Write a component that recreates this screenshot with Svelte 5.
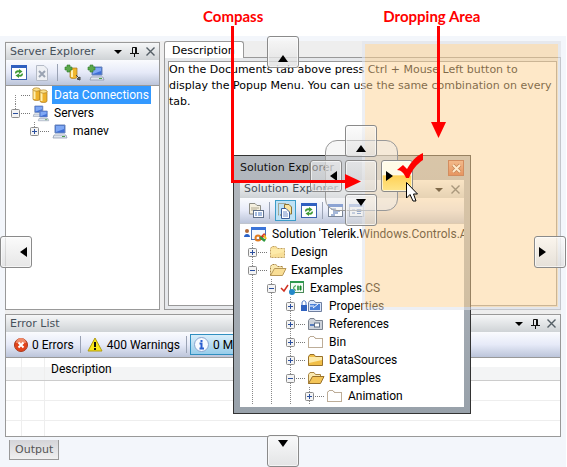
<script>
  const servers = [
    { label: 'Data Connections', icon: 'db', cells: ['down'], stub: true, selected: true },
    { label: 'Servers', icon: 'servers', cells: ['up minus'] },
    { label: 'manev', icon: 'pc', cells: ['', 'up plus'] }
  ];
  const solution = [
    { label: "Solution 'Telerik.Windows.Controls.A", icon: 'solution', cells: [] },
    { label: 'Design', icon: 'folderdots', cells: ['line plus'] },
    { label: 'Examples', icon: 'opendots', cells: ['line minus'] },
    { label: 'Examples.CS', icon: 'csharp', cells: ['line', 'line minus'] },
    { label: 'Properties', icon: 'properties', cells: ['line', 'line', 'line plus'] },
    { label: 'References', icon: 'references', cells: ['line', 'line', 'line plus'] },
    { label: 'Bin', icon: 'ghost', cells: ['line', 'line', 'line plus'] },
    { label: 'DataSources', icon: 'folder', cells: ['line', 'line', 'line plus'] },
    { label: 'Examples', icon: 'open', cells: ['line', 'line', 'line minus'] },
    { label: 'Animation', icon: 'ghost', cells: ['line', 'line', 'line', 'line plus'] }
  ];
  const arrows = {
    up: 'M5 0L10 7H0Z',
    down: 'M0 0H10L5 7Z',
    left: 'M7 0V10L0 5Z',
    right: 'M0 0V10L7 5Z'
  };
</script>

{#snippet arrow(dir)}
  <svg class="arrow" width={dir === 'up' || dir === 'down' ? 10 : 7} height={dir === 'up' || dir === 'down' ? 7 : 10}><path d={arrows[dir]} /></svg>
{/snippet}

{#snippet monitor(x, y)}
  <g transform="translate({x} {y})">
    <path d="M1 0H11V8H1Z" fill="#3f6fd6" stroke="#6d87b8" />
    <path d="M2 1H10V4L2 7Z" fill="#7fa8f4" />
    <path d="M0 10H12L13 13H-1Z" fill="#dfe5ee" stroke="#8794a8" stroke-width=".7" />
    <path d="M8 11.500H11" stroke="#4a9e4a" />
  </g>
{/snippet}

{#snippet plusMark(x, y)}
  <path transform="translate({x} {y})" d="M2 0H5V2H7V5H5V7H2V5H0V2H2Z" fill="#5aa84a" stroke="#2f7a2a" stroke-width=".6" />
{/snippet}

{#snippet refresh(x, y)}
  <g transform="translate({x} {y})">
    <rect x=".5" y=".5" width="15" height="14" fill="#fff" stroke="#3a62b0" />
    <path d="M0 0H16V3H0Z" fill="#2f5fc0" />
    <path d="M4 8C4 6 6 5 8 5.500V4L11.500 6.500L8 9V7.500C6 7 5.500 8 5 9Z" fill="#3f9a35" />
    <path d="M12 9C12 11 10 12 8 11.500V13L4.500 10.500L8 8.500V9.700C10 10 10.500 9.500 11 8Z" fill="#3f9a35" />
  </g>
{/snippet}

{#snippet treeIcon(kind)}
  <svg class="ticon" width="27" height="18">
    {#if kind !== 'solution' && kind !== 'csharp' && kind !== 'properties'}
      <path d="M-4 9.500H5" stroke="#777" stroke-dasharray="1 1" />
    {/if}
    {#if kind === 'db'}
      <path d="M8 3V13C8 15 15 15 15 13V3Z" fill="#eeb22d" stroke="#a8761a" stroke-width=".7" />
      <path d="M9.500 4V13" stroke="#fff0b0" stroke-width="2" />
      <ellipse cx="11.500" cy="3.500" rx="3.500" ry="1.700" fill="#fbe18a" stroke="#a8761a" stroke-width=".6" />
      <path d="M15 5V15C15 17 22 17 22 15V5Z" fill="#eeb22d" stroke="#a8761a" stroke-width=".7" />
      <path d="M16.500 6V15" stroke="#fff0b0" stroke-width="2" />
      <ellipse cx="18.500" cy="5.500" rx="3.500" ry="1.700" fill="#fbe18a" stroke="#a8761a" stroke-width=".6" />
    {:else if kind === 'servers'}
      <g transform="translate(9 2) scale(.8)">{@render monitor(0, 0)}</g>
      <g transform="translate(14 7) scale(.75)">{@render monitor(0, 0)}</g>
    {:else if kind === 'pc'}
      {@render monitor(10, 3)}
    {:else if kind === 'solution'}
      <circle cx="4" cy="6" r="2" fill="#b06a3a" />
      <path d="M1 12C1 8 7 8 7 12Z" fill="#2b62c8" />
      <rect x="8.500" y="2.500" width="14" height="12" fill="#f4f8ff" stroke="#4a72b8" />
      <path d="M8 2H23V5H8Z" fill="#3b74d8" />
      <circle cx="15" cy="13" r="2.500" fill="none" stroke="#e07a20" stroke-width="2" />
      <path d="M17 14L22 9" stroke="#d8302a" stroke-width="2.500" />
      <path d="M17 12L22 16" stroke="#2f9a3f" stroke-width="2.500" />
      <path d="M21 10L23 14" stroke="#f0c020" stroke-width="2" />
    {:else if kind === 'csharp'}
      <path d="M0 9L3 12L7 6" fill="none" stroke="#d03020" stroke-width="1.500" />
      <rect x="9.500" y="2.500" width="13" height="11" fill="#f4fbf4" stroke="#4a8a5a" />
      <path d="M9 2H23V4H9Z" fill="#2f9a4f" />
      <path d="M15 7C12 6 12 12 15 11M17 6.500V11.500M19.500 6.500V11.500M16 8H21M16 10H21" fill="none" stroke="#178a2a" />
      <circle cx="11" cy="13" r="3" fill="#2488c8" />
    {:else if kind === 'properties'}
      <rect x="1" y="8" width="6" height="6" fill="#2f62c0" />
      <path d="M2 8V6C2 3 6 3 6 6V8" fill="none" stroke="#4a78c8" />
      <path d="M8.500 14.500V5.500L10 3.500H14L15.500 5.500H21.500V14.500Z" fill="#dbe6fa" stroke="#6f7f9f" />
      <path d="M10 7H20V13H10Z" fill="#4a7fd8" />
      <path d="M10 9H14M13 11L18 7" stroke="#fff" />
    {:else if kind === 'references'}
      <path d="M8.500 14.500V5.500L10 3.500H14L15.500 5.500H22.500V14.500Z" fill="#cdd2da" stroke="#7c8490" />
      <path d="M10 10H14" stroke="#2f5fb0" stroke-width="1.500" />
      <rect x="14.500" y="8" width="5" height="4" fill="#fff" stroke="#5f6f88" />
    {:else if kind === 'ghost'}
      <path d="M8.500 14.500V5.500L10 3.500H14L15.500 5.500H22.500V14.500Z" fill="#fff" stroke="#7a5a30" stroke-dasharray="1 1" />
    {:else if kind === 'folder' || kind === 'folderdots'}
      <path d="M8.500 14.500V5.500L10 3.500H14L15.500 5.500H22.500V14.500Z" fill={kind === 'folder' ? '#f0be48' : '#f8df98'} stroke={kind === 'folder' ? '#98702a' : '#c0a060'} stroke-dasharray={kind === 'folder' ? 'none' : '2 1'} />
      <path d="M9 6H22V9L9 12Z" fill="#fdeaa8" />
    {:else}
      <path d="M8.500 14.500V5.500L10 3.500H14L15.500 5.500H20.500V8Z" fill="#fae9b0" stroke="#a88440" stroke-dasharray={kind === 'open' ? 'none' : '2 1'} />
      <path d="M8.500 14.500L12.500 7.500H24L20.500 14.500Z" fill={kind === 'open' ? '#f4c558' : '#f9de95'} stroke={kind === 'open' ? '#98702a' : '#b89858'} />
    {/if}
  </svg>
{/snippet}

{#snippet tree(rows)}
  <ul class="tree">
    {#each rows as row}
      <li>
        {#each row.cells as cell}
          <span class="cell {cell}">
            {#if cell.includes('plus') || cell.includes('minus')}
              <svg class="expander" width="9" height="9"><rect x=".5" y=".5" width="8" height="8" rx="1" fill="#f4f4f4" stroke="#8c8c8c" /><path d={cell.includes('plus') ? 'M2 4.500H7M4.500 2V7' : 'M2 4.500H7'} stroke="#2b4f9e" /></svg>
            {/if}
          </span>
        {/each}
        {@render treeIcon(row.icon)}
        <span class="label" class:selected={row.selected}>{row.label}</span>
      </li>
    {/each}
  </ul>
{/snippet}

{#snippet chrome(pin)}
  <span class="chrome">
    <button aria-label="Menu"><svg width="9" height="9"><path d="M0 3H8L4 7Z" fill="currentColor" /></svg></button>
    {#if pin}
      <button aria-label="Pin"><svg width="9" height="10"><path d="M2.500 6V.5H6.500V6M5.500 0V6M0 6.500H9M4.500 6V10" fill="none" stroke="#111" /></svg></button>
    {/if}
    <button aria-label="Close"><svg width="9" height="9"><path d="M.5 .5L8.500 8.500M8.500 .5L.5 8.500" stroke="#555f66" stroke-width="1.400" /></svg></button>
  </span>
{/snippet}

<div class="page">
  <header><span>Compass</span><span>Dropping Area</span></header>

  <div class="app">
    <div class="dock">
      <div class="upper">
        <section class="panel explorer">
          <div class="title"><h2>Server Explorer</h2>{@render chrome(true)}</div>
          <div class="toolbar">
            <button aria-label="Refresh"><svg width="16" height="16">{@render refresh(0, 0)}</svg></button>
            <button aria-label="Stop"><svg width="16" height="16"><path d="M2.500 .5H10L13.500 4V15.500H2.500Z" fill="#eef0f4" stroke="#b4bac6" /><path d="M5 6L11 12M11 6L5 12" stroke="#9aa3b2" stroke-width="2" /></svg></button>
            <i class="sep"></i>
            <button aria-label="Connect to database"><svg width="16" height="16"><path d="M5 3V12C5 14 12 14 12 12V3Z" fill="#f0b62e" stroke="#a8761a" stroke-width=".7" /><path d="M7 5V12" stroke="#fff0b0" stroke-width="2" /><path d="M11 10L14 13M12 14L15 12V15Z" stroke="#444" fill="#777" />{@render plusMark(0, 0)}</svg></button>
            <button aria-label="Connect to server"><svg width="16" height="16">{@render monitor(3, 2)}{@render plusMark(0, 0)}</svg></button>
          </div>
          {@render tree(servers)}
        </section>

        <section class="docs">
          <button class="tab">Description</button>
          <div class="frame"><div class="content">
            <p>On the Documents tab above press Ctrl + Mouse Left button to display the Popup Menu. You can use the same combination on every tab.</p>
          </div></div>
        </section>
      </div>

      <section class="panel errors">
        <div class="title"><h2>Error List</h2>{@render chrome(true)}</div>
        <div class="toolbar">
          <button class="filter"><svg width="14" height="14"><circle cx="7" cy="7" r="6.500" fill="#e2441c" stroke="#a83a20" /><path d="M2 5A5 5 0 0 1 12 5Z" fill="#f08a68" /><path d="M4.500 4.500L9.500 9.500M9.500 4.500L4.500 9.500" stroke="#fff" stroke-width="2" /></svg>0 Errors</button>
          <i class="sep"></i>
          <button class="filter"><svg width="16" height="15"><path d="M8 1L15 14H1Z" fill="#f8e51a" stroke="#b09a10" stroke-linejoin="round" /><path d="M8 5V10M8 11V13" stroke="#111" stroke-width="2" /></svg>400 Warnings</button>
          <i class="sep"></i>
          <button class="filter on"><svg width="15" height="15"><circle cx="7.500" cy="7.500" r="7" fill="#f6faff" stroke="#8aa6d0" /><path d="M7.500 3V5M5.500 6.500H7.500V11M5.500 11.500H10" fill="none" stroke="#2b5fd0" stroke-width="2" /></svg>0 Messages</button>
        </div>
        <table>
          <thead><tr><th class="a"></th><th class="b"></th><th>Description</th></tr></thead>
          <tbody>
            <tr><td></td><td></td><td></td></tr>
            <tr><td></td><td></td><td></td></tr>
            <tr class="last"><td></td><td></td><td></td></tr>
          </tbody>
        </table>
      </section>
    </div>
    <button class="output">Output</button>
  </div>

  <section class="window">
    <div class="caption"><h2>Solution Explorer</h2><button class="close" aria-label="Close window"><svg width="9" height="9"><path d="M1 1L8 8M8 1L1 8" stroke="#8b3a1c" stroke-width="3.500" /><path d="M1 1L8 8M8 1L1 8" stroke="#fff" stroke-width="2" /></svg></button></div>
    <div class="inner">
      <div class="title"><h2>Solution Explorer</h2>{@render chrome(false)}</div>
      <div class="toolbar">
        <button aria-label="Properties"><svg width="16" height="16"><path d="M1.500 .5H7L9 2.500H12.500V11H1.500Z" fill="#f4efdf" stroke="#8d8d85" /><path d="M3 5H11M3 7H9" stroke="#b0a890" /><rect x="5.500" y="7.500" width="10" height="7" fill="#fff" stroke="#5f6f88" /><path d="M7 10H9M10 10H14M7 12H9M10 12H14" stroke="#4a78c0" /></svg></button>
        <i class="sep"></i>
        <button class="active" aria-label="Show all files"><svg width="16" height="16"><path d="M.5 .5H8V12H.5Z" fill="none" stroke="#86703f" stroke-dasharray="1 1" /><path d="M6.500 1.500H11L13.500 4V11H6.500Z" fill="#fbe5a0" stroke="#8a7030" /><path d="M3.500 5.500H8L11.500 9V15.500H3.500Z" fill="#fff" stroke="#3d5f98" /><path d="M5 9H9M5 11H10M5 13H10" stroke="#6f8fc8" /></svg></button>
        <button aria-label="Refresh"><svg width="16" height="16">{@render refresh(0, 0)}</svg></button>
        <i class="sep"></i>
        <button aria-label="View code"><svg width="16" height="16"><rect x=".5" y="1.500" width="14" height="12" fill="#fff" stroke="#7b8698" /><path d="M0 1H15V4H0Z" fill="#3f68c0" /><path d="M3 6H8M5 8H12M5 10H10M3 12H7" stroke="#4a6fb0" /></svg></button>
        <button aria-label="View designer"><svg width="16" height="16"><rect x=".5" y="1.500" width="14" height="12" fill="#fff" stroke="#7b8698" /><path d="M0 1H15V4H0Z" fill="#4f79cc" /><path d="M3 7H6M3 10H6M8 6.500H12V8.500H8ZM8 10.500H12" fill="none" stroke="#4a6fb0" /></svg></button>
      </div>
      {@render tree(solution)}
    </div>
  </section>

  <div class="droparea"></div>
  <div class="compass">
    <div class="plate"></div>
    <button class="guide n" aria-label="Dock top">{@render arrow('up')}</button>
    <button class="guide w" aria-label="Dock left">{@render arrow('left')}</button>
    <button class="guide c" aria-label="Dock centre"></button>
    <button class="guide e hot" aria-label="Dock right">{@render arrow('right')}</button>
    <button class="guide s" aria-label="Dock bottom">{@render arrow('down')}</button>
  </div>
  <button class="guide edge top" aria-label="Dock to top edge">{@render arrow('up')}</button>
  <button class="guide edge left" aria-label="Dock to left edge">{@render arrow('left')}</button>
  <button class="guide edge right" aria-label="Dock to right edge">{@render arrow('right')}</button>
  <button class="guide edge bottom" aria-label="Dock to bottom edge">{@render arrow('down')}</button>

  <svg class="notes" width="566" height="467">
    <path d="M232.500 26V181.500H348" fill="none" stroke="#f00" stroke-width="3" />
    <path d="M345 174L361 181.500L345 189Z" fill="#f00" />
    <path d="M438.500 26V124" stroke="#f00" stroke-width="3" />
    <path d="M431 122H446L438.500 138Z" fill="#f00" />
    <path d="M397 170L403 165L407 169C411 162 416 156 423 153V160C417 164 412 170 409 178H406C404 173 401 170 397 170Z" fill="#f00" />
    <path d="M406.500 182.500V198L410 194.500L413 201H416L413.500 194H417.500Z" fill="#fff" stroke="#000" stroke-linejoin="round" />
  </svg>
</div>

<style>
  :global(body) { margin: 0; background: #fff; }
  .page { position: relative; min-height: 100vh; display: flex; flex-direction: column; overflow: hidden; font: 12px/18px Roboto, "Open Sans", sans-serif; color: #000; }
  header { display: flex; gap: 120px; height: 36px; box-sizing: border-box; padding: 7px 0 0 203px; font: bold 15px/18px Lato, sans-serif; color: #f00; white-space: nowrap; }
  button { font: inherit; color: inherit; border: 0; padding: 0; margin: 0; background: none; display: flex; align-items: center; justify-content: center; white-space: nowrap; }
  svg { display: block; flex: none; overflow: visible; }
  h2, p, ul { margin: 0; padding: 0; }
  .app { flex: 1; display: flex; flex-direction: column; align-items: flex-start; margin-right: 1px; padding: 5px 5px 7px; background: #f3f6fb; }
  .dock { flex: 1; align-self: stretch; display: flex; flex-direction: column; gap: 4px; background: #eee; }
  .upper { flex: 1; display: flex; gap: 4px; }
  .panel { border: 1px solid #999; background: #fff; display: flex; flex-direction: column; }
  .explorer { width: 153px; margin-top: 1px; }
  .title { display: flex; align-items: center; justify-content: space-between; height: 17px; padding: 0 4px; background: linear-gradient(#f6f7f8, #cfd3d6); color: #46505a; }
  h2 { font: 11px/16px "DejaVu Sans", Verdana, sans-serif; white-space: nowrap; }
  .chrome { display: flex; align-items: center; gap: 7px; color: #000; }
  .toolbar { display: flex; align-items: center; gap: 7px; height: 25px; padding: 0 5px; background: linear-gradient(#fafbfe, #e6eaf8 50%, #bcc5da); border-bottom: 1px solid #999; }
  .sep { width: 1px; height: 17px; background: #9aa2b4; }
  .tree { list-style: none; }
  li { display: flex; height: 18px; }
  .cell { width: 19px; flex: none; display: flex; align-items: center; justify-content: center; }
  .line, .up, .down { background: repeating-linear-gradient(#888 0 1px, transparent 1px 2px) 9px 0 / 1px 18px no-repeat; }
  .up { background-size: 1px 9px; }
  .down { background-size: 1px 9px; background-position: 9px 9px; }
  .label { padding: 0 2px; white-space: nowrap; }
  .selected { background: #3399ff; color: #fff; }
  .docs { flex: 1; display: flex; flex-direction: column; align-items: flex-start; font: 11px/16px "DejaVu Sans", Verdana, sans-serif; }
  .tab { height: 17px; padding: 2px 8px 0 7px; border: 1px solid #999; border-bottom: 0; border-radius: 3px 3px 0 0; background: #fff; margin-bottom: -1px; position: relative; }
  .frame { flex: 1; align-self: stretch; border: 1px solid #999; padding: 3px; background: #e6e8eb; display: flex; }
  .content { flex: 1; background: #fff; border: 1px solid #999; }
  .errors .toolbar { padding: 0 4px 0 7px; gap: 5px; }
  .filter { gap: 4px; height: 21px; padding: 0 1px; }
  .on { border: 1px solid #2f8fc0; background: linear-gradient(#d8eefb, #98cdea); padding: 0 3px; margin-left: -2px; }
  table { border-collapse: collapse; width: 100%; table-layout: fixed; }
  th { height: 22px; padding: 0 6px; border-bottom: 1px solid #ccc; border-right: 1px solid #eee; background: linear-gradient(#fff 40%, #f3f4f5 40%); font-weight: normal; text-align: left; }
  .a { width: 3px; }
  .b { width: 10px; }
  td { height: 19px; padding: 0; border-bottom: 1px solid #eee; border-right: 1px solid #eee; }
  .last td { height: 15px; border-bottom: 0; }
  th:last-child, td:last-child { border-right: 0; }
  .output { margin: 3px 0 0 4px; height: 20px; padding: 0 5px; border: 1px solid #999; border-top: 0; background: linear-gradient(#d4d4d8, #f0f0f0); color: #555; font: 11px/16px "DejaVu Sans", Verdana, sans-serif; }
  .window { position: absolute; left: 233px; top: 155px; width: 224px; border: 1px solid #333; padding: 0 6px 6px; background: linear-gradient(#b4b9bf, #98a1aa); }
  .caption { display: flex; justify-content: space-between; align-items: center; height: 24px; }
  .close { width: 16px; height: 16px; border: 1px solid #a8482c; background: linear-gradient(#e8a080, #d05a30); }
  .caption h2 { color: #111; }
  .inner { background: #fff; overflow: hidden; }
  .inner .title { height: 18px; }
  .inner .toolbar { padding: 0 8px; gap: 5px; border-bottom-color: #c0c5ce; }
  .inner .tree { padding: 1px 0 2px 3px; }
  .active { width: 21px; height: 21px; border: 1px solid #3c9cc8; background: #bfe2f5; }
  .droparea { position: absolute; left: 362px; right: 6px; top: 41px; height: 263px; border: 3px solid rgba(225, 229, 236, .6); background: rgba(253, 209, 145, .5); background-clip: padding-box; }
  .compass { position: absolute; left: 310px; top: 125px; width: 103px; height: 101px; }
  .plate { position: absolute; inset: 15px; border: 1px solid #999; border-radius: 12px; background: rgba(235, 235, 235, .45); }
  .guide { position: absolute; width: 32px; height: 32px; border: 1px solid #8a8a8a; border-radius: 3px; box-shadow: inset 0 0 0 1px rgba(255, 255, 255, .6); background: linear-gradient(rgba(248, 248, 248, .5), rgba(215, 215, 215, .5)); }
  .edge { background: linear-gradient(rgba(250, 250, 250, .75), rgba(222, 222, 222, .75)); }
  .n { left: 35px; top: 0; padding-top: 15px; }
  .w { left: 0; top: 35px; padding-left: 14px; }
  .c { left: 35px; top: 35px; }
  .e { left: 71px; top: 35px; padding-right: 15px; }
  .s { left: 35px; bottom: 0; padding-bottom: 15px; }
  .hot { background: linear-gradient(#fffbe8 45%, #ffd257 50%, #ffe58a); }
  .top { left: 267px; top: 36px; padding-top: 13px; }
  .bottom { left: 267px; bottom: 0; padding-bottom: 16px; }
  .left { left: 0; top: 236px; padding-left: 14px; }
  .right { right: 1px; top: 236px; padding-right: 15px; }
  .notes { position: absolute; left: 0; top: 0; pointer-events: none; }
</style>
